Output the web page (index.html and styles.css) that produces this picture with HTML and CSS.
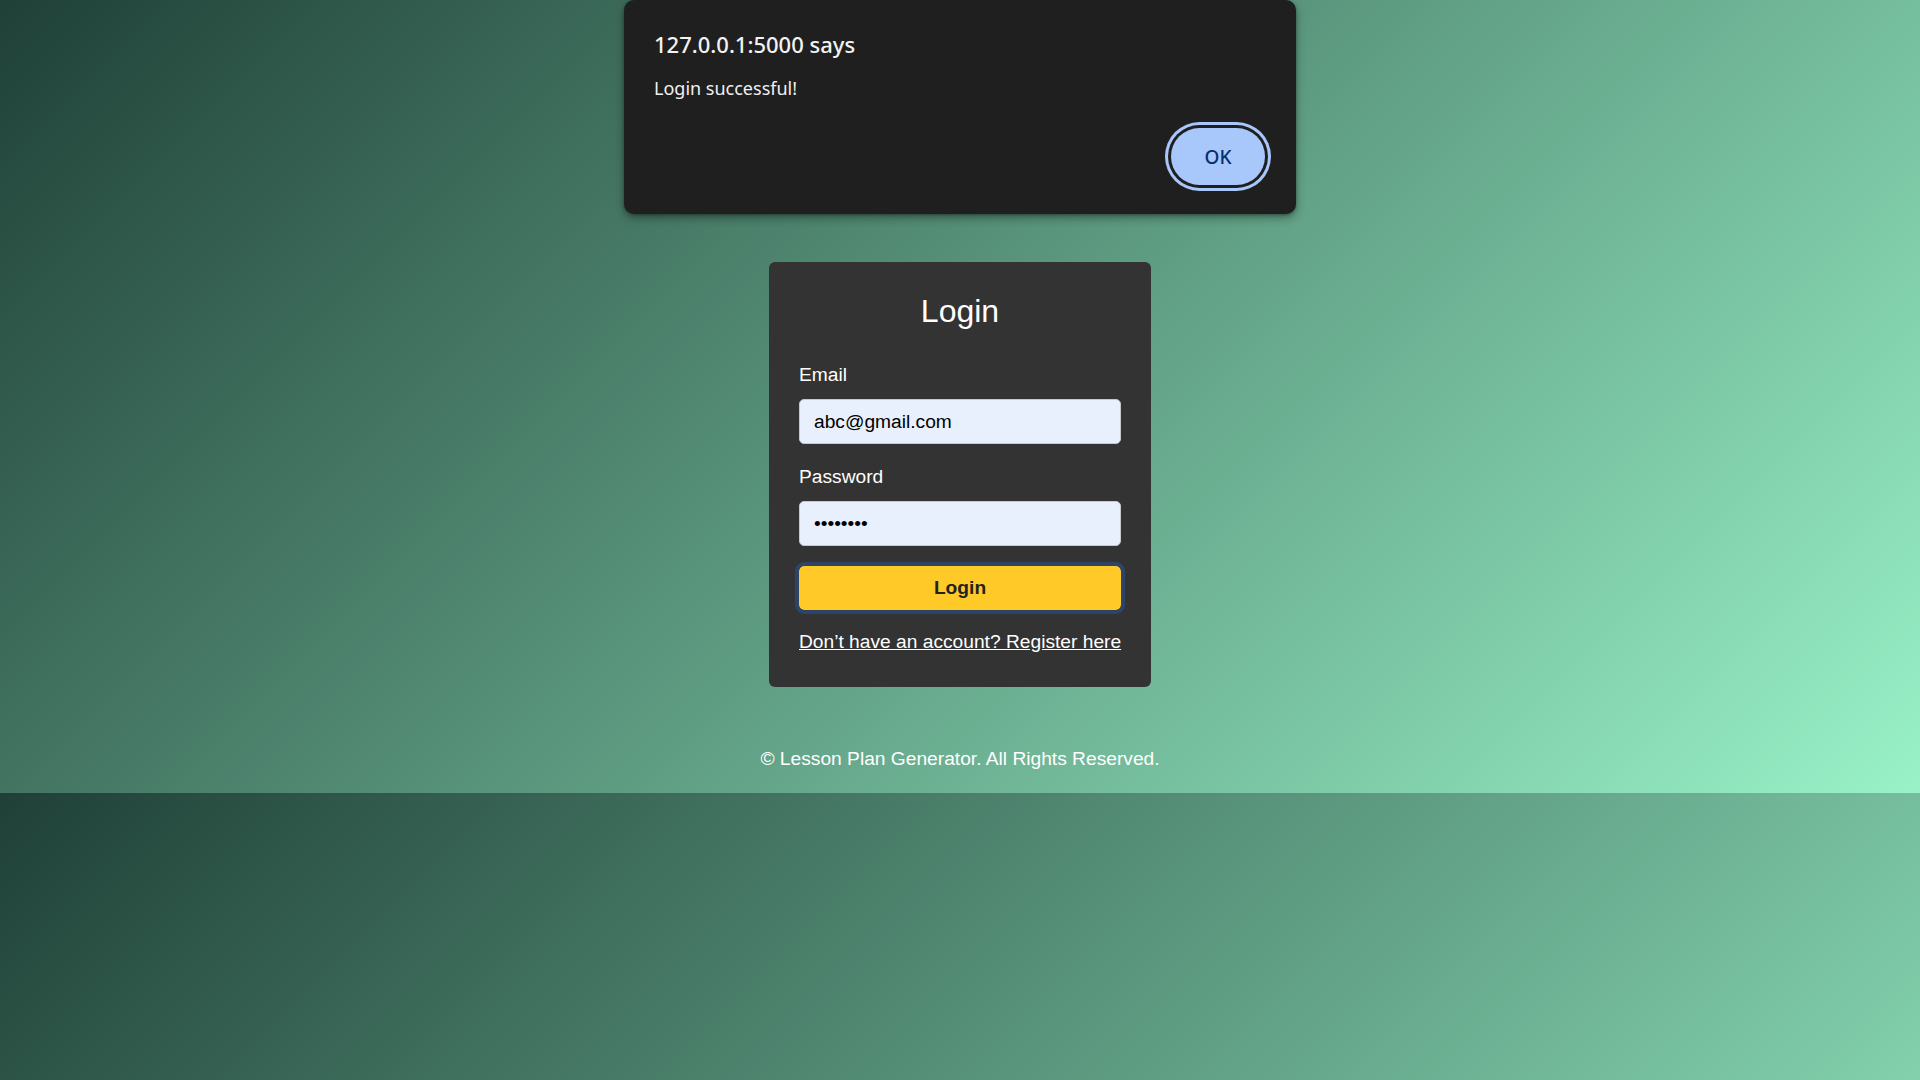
FILE: index.html
```html
<!DOCTYPE html>
<html lang="en">
<head>
<meta charset="utf-8">
<title>Login</title>
<link rel="stylesheet" href="styles.css">
</head>
<body>
<main class="page">
  <form class="card">
    <h1 class="card-title">Login</h1>
    <label class="field-label" for="email">Email</label>
    <input class="field-input" id="email" type="email" value="abc@gmail.com">
    <label class="field-label field-label-gap" for="password">Password</label>
    <input class="field-input" id="password" type="password" value="password">
    <button type="button" class="btn-login">Login</button>
    <p class="switch"><a class="switch-link" href="#">Don’t have an account? Register here</a></p>
  </form>
</main>
<footer class="footer">© Lesson Plan Generator. All Rights Reserved.</footer>

<div class="alert" role="alertdialog">
  <div class="alert-title">127.0.0.1:5000 says</div>
  <div class="alert-msg">Login successful!</div>
  <div class="alert-actions"><button type="button" class="alert-ok">OK</button></div>
</div>
</body>
</html>
```
FILE: styles.css
```css
html, body {
  margin: 0;
  padding: 0;
}

body {
  font-family: "Liberation Sans", Arial, sans-serif;
  font-size: 19.2px;
  color: #ffffff;
  background: linear-gradient(135deg, #1f4037, #99f2c8);
}

.page {
  display: flex;
  justify-content: center;
  padding-top: 262px;
}

.card {
  width: 322px;
  padding: 30px;
  background: #333333;
  border-radius: 6px;
  display: flex;
  flex-direction: column;
}

.card-title {
  margin: 1px 0 34px;
  font-size: 32px;
  font-weight: normal;
  text-align: center;
  line-height: normal;
}

.field-label {
  display: block;
  margin-bottom: 13px;
  line-height: normal;
}

.field-label-gap {
  margin-top: 22px;
}

.field-input {
  height: 45px;
  box-sizing: border-box;
  border: 1px solid #c8c8c8;
  border-radius: 5px;
  background: #e8f0fe;
  padding: 0 14px;
  font: inherit;
  color: #000000;
  margin: 0;
}

.btn-login {
  margin-top: 19.5px;
  height: 44px;
  border: none;
  border-radius: 5px;
  background: #ffca28;
  color: #222222;
  font: inherit;
  font-weight: bold;
  outline: 4.5px solid #2b4468;
  outline-offset: 0;
}

.switch {
  margin: 21px 0 4.5px;
  text-align: center;
  line-height: normal;
  white-space: nowrap;
}

.switch-link {
  color: #ffffff;
  text-decoration: underline;
}

.footer {
  margin-top: 40px;
  padding: 21px 0 23px;
  text-align: center;
  line-height: normal;
  color: #ffffff;
}

/* Browser alert dialog overlay */
.alert {
  position: absolute;
  top: 0;
  left: calc(50% - 336px);
  width: 672px;
  height: 214px;
  box-sizing: border-box;
  background: #1f1f1f;
  border-radius: 10px;
  box-shadow: 0 4px 10px rgba(0, 0, 0, 0.35), 0 1px 3px rgba(0, 0, 0, 0.3);
  padding: 29px 31px 0 30px;
  font-family: "Noto Sans", "Open Sans", sans-serif;
  color: #f0f0f0;
}

.alert-title {
  font-size: 22px;
  font-weight: 500;
  line-height: 30px;
  color: #f2f2f2;
}

.alert-msg {
  margin-top: 16.5px;
  font-size: 18px;
  line-height: 24px;
}

.alert-actions {
  display: flex;
  justify-content: flex-end;
  margin-top: 28.5px;
}

.alert-ok {
  width: 94px;
  height: 57px;
  border: none;
  border-radius: 29px;
  background: #a8c7fa;
  color: #062e6f;
  font-family: "Noto Sans", "Open Sans", sans-serif;
  font-size: 19px;
  font-weight: 500;
  box-shadow: 0 0 0 3px #1f1f1f, 0 0 0 6px #a8c7fa;
  padding: 0;
}
```
